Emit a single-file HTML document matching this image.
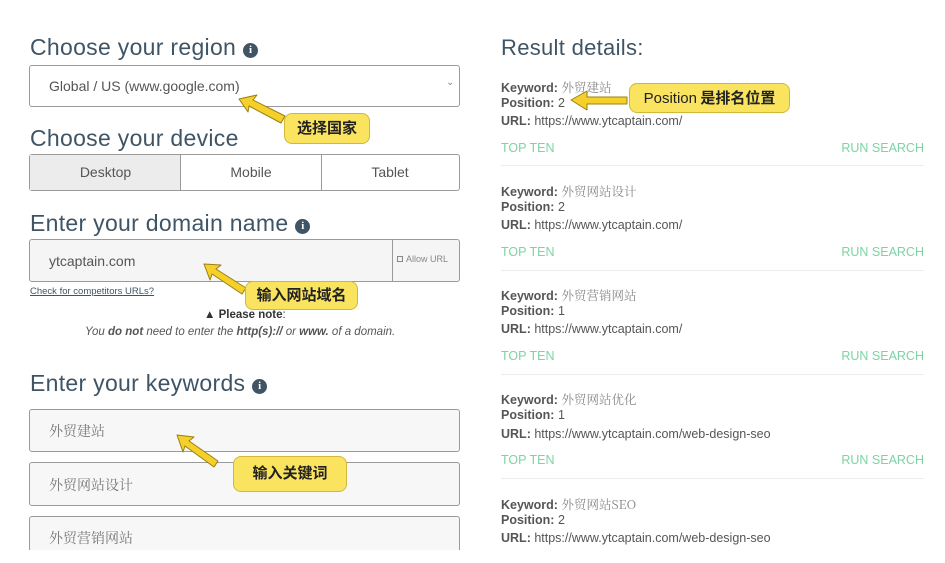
<!DOCTYPE html>
<html><head><meta charset="utf-8">
<style>
*{margin:0;padding:0;box-sizing:border-box}
body{width:945px;height:563px;background:#fff;position:relative;overflow:hidden;font-family:"Liberation Sans","Noto Sans CJK SC",sans-serif;color:#555}
.a{position:absolute;white-space:nowrap}
.h{font-size:23px;color:#3f5566;letter-spacing:.3px}
.info{display:inline-block;width:15px;height:15px;border-radius:50%;background:#3f5566;color:#fff;font:bold 11px "Liberation Serif",serif;text-align:center;line-height:15px;vertical-align:2px;margin-left:7px}
.box{position:absolute;border:1px solid #9a9a9a;border-radius:3px}
.call{position:absolute;background:#f9e35f;border:1.5px solid #d4b73a;border-radius:8px;font-weight:bold;color:#222;font-size:15px;text-align:center;font-family:"Noto Sans CJK SC",sans-serif}
.kw{font-family:"Noto Serif CJK SC",serif;color:#888}
.r{font-size:12.5px;color:#555}
.r b{color:#555}
.g{font-size:12.5px;color:#7dd3a3}
.sep{position:absolute;left:501px;width:423px;height:1px;background:#ececec}
.ci{font-family:"Noto Serif CJK SC",serif;color:#777;font-size:14px}
</style></head><body>
<div class="a h" style="left:30px;top:34px">Choose your region<span class="info">i</span></div>
<div class="box" style="left:29px;top:65px;width:431px;height:42px"></div>
<div class="a" style="left:49px;top:78px;font-size:14px;color:#555">Global / US (www.google.com)</div>
<div class="a" style="left:446px;top:77px;font-size:10px;color:#888">&#8964;</div>

<div class="a h" style="left:30px;top:125px">Choose your device</div>
<div class="box" style="left:29px;top:154px;width:431px;height:37px"></div>
<div class="a" style="left:30px;top:155px;width:151px;height:35px;background:#ececec;border-right:1px solid #9a9a9a"></div>
<div class="a" style="left:321px;top:155px;width:1px;height:35px;background:#9a9a9a"></div>
<div class="a" style="left:30px;top:164px;width:151px;text-align:center;font-size:14px">Desktop</div>
<div class="a" style="left:181px;top:164px;width:140px;text-align:center;font-size:14px">Mobile</div>
<div class="a" style="left:321px;top:164px;width:138px;text-align:center;font-size:14px">Tablet</div>

<div class="a h" style="left:30px;top:210px">Enter your domain name<span class="info">i</span></div>
<div class="box" style="left:29px;top:239px;width:431px;height:43px;background:#f5f5f5"></div>
<div class="a" style="left:392px;top:240px;width:1px;height:41px;background:#9a9a9a"></div>
<div class="a" style="left:49px;top:253px;font-size:14px;color:#555">ytcaptain.com</div>
<div class="a" style="left:397px;top:254px;font-size:9px;color:#888"><span style="display:inline-block;width:6px;height:6px;border:1px solid #888;margin-right:3px"></span>Allow URL</div>
<div class="a" style="left:30px;top:286px;font-size:9.5px;color:#3f5566;text-decoration:underline">Check for competitors URLs?</div>
<div class="a" style="left:204px;top:309px;font-size:11.5px;color:#333"><b>&#9650; Please note</b>:</div>
<div class="a" style="left:85px;top:326px;font-size:11.5px;color:#555;font-style:italic">You <b>do not</b> need to enter the <b>http(s)://</b> or <b>www.</b> of a domain.</div>

<div class="a h" style="left:30px;top:370px">Enter your keywords<span class="info">i</span></div>
<div class="box" style="left:29px;top:409px;width:431px;height:43px;background:#f7f7f7"></div>
<div class="box" style="left:29px;top:462px;width:431px;height:44px;background:#f7f7f7"></div>
<div class="box" style="left:29px;top:516px;width:431px;height:34px;background:#f7f7f7;border-bottom:none;border-radius:3px 3px 0 0"></div>
<div class="a ci" style="left:49px;top:421px">外贸建站</div>
<div class="a ci" style="left:49px;top:475px">外贸网站设计</div>
<div class="a ci" style="left:49px;top:528px">外贸营销网站</div>

<div class="a h" style="left:501px;top:35px;font-size:22px">Result details:</div>

<div class="a r" style="left:501px;top:78px"><b>Keyword:</b> <span class="kw">外贸建站</span></div>
<div class="a r" style="left:501px;top:96px"><b>Position:</b> 2</div>
<div class="a r" style="left:501px;top:114px"><b>URL:</b> https://www.ytcaptain.com/</div>
<div class="a g" style="left:501px;top:141px">TOP TEN</div><div class="a g" style="right:21px;top:141px">RUN SEARCH</div>
<div class="sep" style="top:165px"></div>

<div class="a r" style="left:501px;top:182px"><b>Keyword:</b> <span class="kw">外贸网站设计</span></div>
<div class="a r" style="left:501px;top:200px"><b>Position:</b> 2</div>
<div class="a r" style="left:501px;top:218px"><b>URL:</b> https://www.ytcaptain.com/</div>
<div class="a g" style="left:501px;top:245px">TOP TEN</div><div class="a g" style="right:21px;top:245px">RUN SEARCH</div>
<div class="sep" style="top:270px"></div>

<div class="a r" style="left:501px;top:286px"><b>Keyword:</b> <span class="kw">外贸营销网站</span></div>
<div class="a r" style="left:501px;top:304px"><b>Position:</b> 1</div>
<div class="a r" style="left:501px;top:322px"><b>URL:</b> https://www.ytcaptain.com/</div>
<div class="a g" style="left:501px;top:349px">TOP TEN</div><div class="a g" style="right:21px;top:349px">RUN SEARCH</div>
<div class="sep" style="top:374px"></div>

<div class="a r" style="left:501px;top:390px"><b>Keyword:</b> <span class="kw">外贸网站优化</span></div>
<div class="a r" style="left:501px;top:408px"><b>Position:</b> 1</div>
<div class="a r" style="left:501px;top:427px"><b>URL:</b> https://www.ytcaptain.com/web-design-seo</div>
<div class="a g" style="left:501px;top:453px">TOP TEN</div><div class="a g" style="right:21px;top:453px">RUN SEARCH</div>
<div class="sep" style="top:478px"></div>

<div class="a r" style="left:501px;top:495px"><b>Keyword:</b> <span class="kw">外贸网站SEO</span></div>
<div class="a r" style="left:501px;top:513px"><b>Position:</b> 2</div>
<div class="a r" style="left:501px;top:531px"><b>URL:</b> https://www.ytcaptain.com/web-design-seo</div>

<svg class="a" style="left:0;top:0" width="945" height="563">
<g fill="#f5cf2a" stroke="#9a7f10" stroke-width="1" stroke-linejoin="round">
<polygon points="239,99 257,95 253,100 285,116 281,123 249,106 248,112"/>
<polygon points="204,264 221,265 216,269 246,288 242,294 212,274 210,280"/>
<polygon points="177,435 194,437 189,441 218,461 214,467 185,446 183,452"/>
<polygon points="571,100 587,91 587,97 627,97 627,104 587,104 587,110"/>
</g>
</svg>
<div class="call" style="left:284px;top:113px;width:86px;height:31px;line-height:28px">选择国家</div>
<div class="call" style="left:245px;top:281px;width:113px;height:29px;line-height:26px">输入网站域名</div>
<div class="call" style="left:233px;top:456px;width:114px;height:36px;line-height:32px">输入关键词</div>
<div class="call" style="left:629px;top:83px;width:161px;height:30px;line-height:27px;font-weight:normal"><span style="font-family:'Liberation Sans',sans-serif">Position</span> <b>是排名位置</b></div>
</body></html>
